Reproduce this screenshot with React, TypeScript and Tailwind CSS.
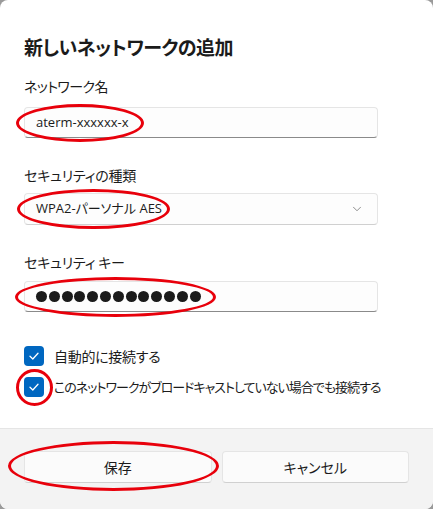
import { ChevronDown } from "lucide-react";

const jp = "font-['Noto_Sans_CJK_JP','Noto_Sans',sans-serif] [font-feature-settings:'palt']";
const mixed = "font-['Open_Sans','Noto_Sans_CJK_JP',sans-serif]";

function Ring({ className }: { className: string }) {
    return <div className={`absolute rounded-[50%] border-[3px] border-[#e8000b] pointer-events-none ${className}`} />;
}

function Check({ label, tight }: { label: string; tight?: boolean }) {
    return (
        <div className="flex items-center gap-[10px] h-[20px]">
            <div className="w-[20px] h-[20px] rounded-[4px] bg-[#0067c0] flex items-center justify-center shrink-0">
                <svg width="12" height="12" viewBox="0 0 12 12" fill="none">
                    <path d="M2 6.3 L4.8 9 L10 3.3" stroke="white" strokeWidth="1.3" strokeLinecap="round" strokeLinejoin="round" />
                </svg>
            </div>
            <span className={`text-[#1b1b1b] whitespace-nowrap ${tight ? "text-[13px] tracking-[-1px]" : "text-[14px] tracking-[-0.3px]"}`}>
                {label}
            </span>
        </div>
    );
}

export default function App() {
    return (
        <div className="w-[433px] h-[509px] bg-[#9a9a9a]">
            <div className={`relative w-[433px] h-[509px] bg-white rounded-[8px] overflow-hidden flex flex-col ${jp}`}>
                {/* body */}
                <div className="flex-1 pl-[24px] pt-[33px]">
                    <h1 className="text-[19px] font-semibold text-[#1b1b1b] leading-[28px] tracking-[-0.5px]">
                        新しいネットワークの追加
                    </h1>

                    <div className="mt-[15px] text-[14px] leading-[20px] text-[#1b1b1b] tracking-[-0.6px]">ネットワーク名</div>
                    <div className="mt-[11px] w-[354px] h-[31px] rounded-[4px] border border-[#e5e5e5] border-b-[#8a8a8a] bg-[#fdfdfd] flex items-center pl-[11px]">
                        <span className="text-[13px] text-[#1b1b1b] font-['Open_Sans',sans-serif]">aterm-xxxxxx-x</span>
                    </div>

                    <div className="mt-[27px] text-[14px] leading-[20px] text-[#1b1b1b] tracking-[-0.2px]">セキュリティの種類</div>
                    <div className="mt-[8px] w-[354px] h-[32px] rounded-[4px] border border-[#e5e5e5] border-b-[#d0d0d0] bg-[#fdfdfd] flex items-center pl-[11px] pr-[13px]">
                        <span className={`flex-1 text-[13px] text-[#1b1b1b] ${mixed} [font-feature-settings:'palt']`}>WPA2-パーソナル AES</span>
                        <ChevronDown size={14} strokeWidth={1.2} className="text-[#606060]" />
                    </div>

                    <div className="mt-[27px] text-[14px] leading-[20px] text-[#1b1b1b] tracking-[-0.2px]">セキュリティ キー</div>
                    <div className="mt-[9px] w-[354px] h-[31px] rounded-[4px] border border-[#e5e5e5] border-b-[#8a8a8a] bg-[#fdfdfd] flex items-center pl-[11px] gap-[1.8px]">
                        {Array.from({ length: 13 }).map((_, i) => (
                            <span key={i} className="w-[11px] h-[11px] rounded-full bg-[#1b1b1b]" />
                        ))}
                    </div>

                    <div className="mt-[34px] flex flex-col gap-[11px]">
                        <Check label="自動的に接続する" />
                        <Check label="このネットワークがブロードキャストしていない場合でも接続する" tight />
                    </div>
                </div>

                {/* footer */}
                <div className="h-[81px] bg-[#f3f3f3] border-t border-[#e5e5e5] flex items-center gap-[10px] px-[24px] pb-[4px]">
                    <button className="flex-1 h-[32px] rounded-[4px] border border-[#e5e5e5] border-b-[#d0d0d0] bg-[#fbfbfb] text-[14px] text-[#1b1b1b]">
                        保存
                    </button>
                    <button className="flex-1 h-[32px] rounded-[4px] border border-[#e5e5e5] border-b-[#d0d0d0] bg-[#fbfbfb] text-[14px] text-[#1b1b1b]">
                        キャンセル
                    </button>
                </div>

                {/* annotation rings */}
                <Ring className="left-[16px] top-[104px] w-[128px] h-[38px]" />
                <Ring className="left-[17px] top-[189px] w-[153px] h-[40px]" />
                <Ring className="left-[15px] top-[277px] w-[201px] h-[40px]" />
                <Ring className="left-[16px] top-[369px] w-[37px] h-[37px]" />
                <Ring className="left-[8px] top-[441px] w-[211px] h-[50px]" />
            </div>
        </div>
    );
}
